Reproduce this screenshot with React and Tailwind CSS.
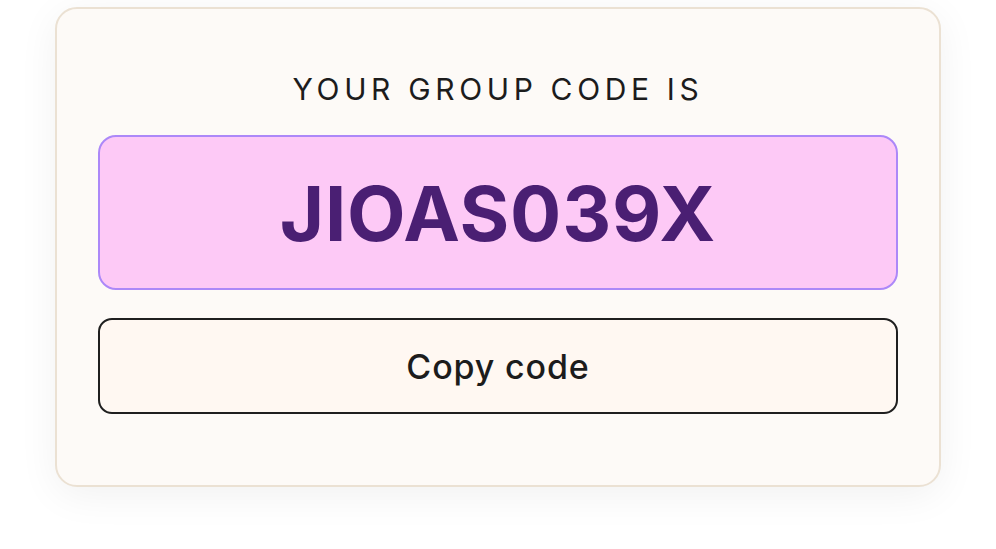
export default function App() {
  return (
    <div className="w-[996px] h-[549px] bg-white pt-[7px] pl-[55px] font-['Inter',sans-serif]">
      <div className="w-[886px] h-[480px] rounded-[22px] border-2 border-[#ebe1d3] bg-[#fdfaf7] shadow-[0_8px_40px_rgba(0,0,0,0.06)] px-[43px] pt-[62px] flex flex-col items-center">
        <p className="text-[30px] leading-[36px] tracking-[0.155em] text-[#1c1c1c] font-normal">
          YOUR GROUP CODE IS
        </p>
        <div className="mt-[28px] w-[800px] h-[155px] rounded-[18px] border-2 border-[#ac88f8] bg-[#fdc9f6] flex items-center justify-center">
          <span className="text-[76px] leading-none font-bold text-[#4a1f73] tracking-[0.01em]">
            JIOAS039X
          </span>
        </div>
        <button
          type="button"
          className="mt-[28px] w-[800px] h-[96px] rounded-[14px] border-2 border-[#1f1f1f] bg-[#fff8f2] flex items-center justify-center text-[34px] font-medium tracking-[0.025em] text-[#1c1c1c]"
        >
          Copy code
        </button>
      </div>
    </div>
  );
}
